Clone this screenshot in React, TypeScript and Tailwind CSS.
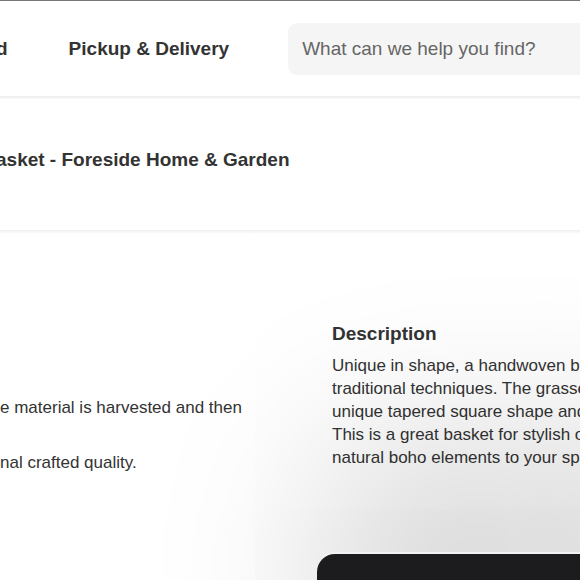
const bodyLines = [
  "Unique in shape, a handwoven basket made using",
  "traditional techniques. The grasses are woven into a",
  "unique tapered square shape and finished by hand.",
  "This is a great basket for stylish organization or adding",
  "natural boho elements to your space.",
];

export default function App() {
  return (
    <div
      className="relative w-[580px] h-[580px] overflow-hidden bg-white text-[#333]"
      style={{ fontFamily: '"Liberation Sans", Arial, sans-serif' }}
    >
      {/* header */}
      <header className="h-[96px] border-t border-[#777] flex items-center whitespace-nowrap">
        <span className="-ml-[4px] text-[19px] font-bold leading-[23px]">d</span>
        <span className="ml-[61px] text-[19px] font-bold leading-[23px]">Pickup &amp; Delivery</span>
        <div className="ml-[59px] shrink-0 w-[340px] h-[52px] rounded-[9px] bg-[#f5f5f5] flex items-center pl-[14px]">
          <span className="text-[19px] text-[#666] leading-[23px]">What can we help you find?</span>
        </div>
      </header>
      <div className="h-[3px] bg-gradient-to-b from-[#ececec] to-[#f9f9f9]" />

      {/* title */}
      <div className="h-[131px] pt-[49px] whitespace-nowrap">
        <h1 className="-ml-[4px] text-[19px] font-bold leading-[23px]">
          asket - Foreside Home &amp; Garden
        </h1>
      </div>
      <div className="h-[3px] bg-gradient-to-b from-[#efefef] to-[#fafafa]" />

      {/* details */}
      <div className="flex pt-[89px] whitespace-nowrap text-[17px] leading-[23px]">
        <div className="w-[332px] shrink-0">
          <div className="mt-[74px]">e material is harvested and then</div>
          <div className="mt-[32px]">nal crafted quality.</div>
        </div>
        <div className="shrink-0">
          <h2 className="text-[19px] font-bold leading-[23px] mb-[9px]">Description</h2>
          {bodyLines.map((l) => (
            <div key={l}>{l}</div>
          ))}
        </div>
      </div>

      {/* sticky bottom bar */}
      <div className="absolute left-[317px] top-[554px] w-[420px] h-[200px] rounded-[18px] bg-[#1c1c1e] shadow-[0_-2px_0_#f2f2f2,70px_-50px_170px_70px_rgba(0,0,0,0.15)]" />
    </div>
  );
}
